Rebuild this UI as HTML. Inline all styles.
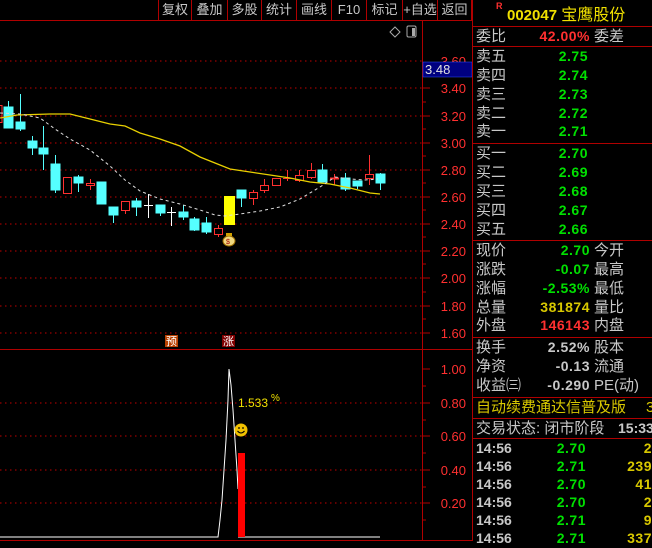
<!DOCTYPE html>
<html><head><meta charset="utf-8"><style>
*{margin:0;padding:0;box-sizing:border-box}
body{width:652px;height:541px;background:#000;overflow:hidden;position:relative;font-family:"Liberation Sans","Noto Sans CJK SC",sans-serif;}
.a{position:absolute;white-space:nowrap}
.btn{position:absolute;top:0;height:20px;line-height:20px;font-size:13px;color:#c8c8c8;text-align:center;border-left:1px solid #b00000}
.r{position:absolute;left:474px;width:178px;height:19px;font-size:15px;line-height:19px;color:#c8c8c8}
.r span{position:absolute}
.l{left:2px}
.v{right:82px;font-weight:bold;font-size:14px;letter-spacing:0.5px}
.t{left:120px}
.g{color:#00e000}.rd{color:#ff3030}.y{color:#d8c800}.w{color:#c8c8c8}
.hl{position:absolute;left:472px;width:180px;height:1px;background:#b00000}
</style></head><body>
<div class="btn" style="left:158px;width:33px">复权</div>
<div class="btn" style="left:191px;width:36px">叠加</div>
<div class="btn" style="left:227px;width:34px">多股</div>
<div class="btn" style="left:261px;width:35px">统计</div>
<div class="btn" style="left:296px;width:35px">画线</div>
<div class="btn" style="left:331px;width:35px">F10</div>
<div class="btn" style="left:366px;width:36px">标记</div>
<div class="btn" style="left:402px;width:35px">+自选</div>
<div class="btn" style="left:437px;width:35px;border-right:1px solid #b00000">返回</div>
<div class="a" style="left:0;top:20px;width:472px;height:1px;background:#b00000"></div>
<div class="a" style="left:472px;top:0;width:1px;height:541px;background:#b00000"></div>
<div class="a" style="left:496px;top:1px;font-size:9px;color:#ff3030;font-weight:bold">R</div>
<div class="a" style="left:507px;top:1px;font-size:15px;color:#f0e000;font-weight:bold">002047 <span style="font-weight:normal;font-size:16px">宝鹰股份</span></div>

<svg class="a" style="left:0;top:0" width="472" height="541">
<g stroke="#c00000" stroke-dasharray="1.5,3.5">
<line x1="0" y1="61" x2="422" y2="61"/><line x1="0" y1="88" x2="422" y2="88"/><line x1="0" y1="116" x2="422" y2="116"/><line x1="0" y1="143" x2="422" y2="143"/><line x1="0" y1="170" x2="422" y2="170"/><line x1="0" y1="197" x2="422" y2="197"/><line x1="0" y1="224" x2="422" y2="224"/><line x1="0" y1="251" x2="422" y2="251"/><line x1="0" y1="278" x2="422" y2="278"/><line x1="0" y1="306" x2="422" y2="306"/><line x1="0" y1="333" x2="422" y2="333"/>
<line x1="0" y1="403" x2="422" y2="403"/><line x1="0" y1="436" x2="422" y2="436"/><line x1="0" y1="470" x2="422" y2="470"/><line x1="0" y1="503" x2="422" y2="503"/>
</g>
<line x1="0" y1="349.5" x2="472" y2="349.5" stroke="#b00000"/>
<line x1="422.5" y1="20" x2="422.5" y2="541" stroke="#b00000"/>
<g stroke="#b00000">
<line x1="422" y1="88" x2="430" y2="88"/><line x1="422" y1="116" x2="430" y2="116"/><line x1="422" y1="143" x2="430" y2="143"/><line x1="422" y1="170" x2="430" y2="170"/><line x1="422" y1="197" x2="430" y2="197"/><line x1="422" y1="224" x2="430" y2="224"/><line x1="422" y1="251" x2="430" y2="251"/><line x1="422" y1="278" x2="430" y2="278"/><line x1="422" y1="306" x2="430" y2="306"/><line x1="422" y1="333" x2="430" y2="333"/>
<line x1="422" y1="102" x2="426" y2="102"/><line x1="422" y1="129" x2="426" y2="129"/><line x1="422" y1="156" x2="426" y2="156"/><line x1="422" y1="183" x2="426" y2="183"/><line x1="422" y1="210" x2="426" y2="210"/><line x1="422" y1="237" x2="426" y2="237"/><line x1="422" y1="264" x2="426" y2="264"/><line x1="422" y1="292" x2="426" y2="292"/><line x1="422" y1="319" x2="426" y2="319"/>
<line x1="422" y1="369" x2="430" y2="369"/><line x1="422" y1="403" x2="430" y2="403"/><line x1="422" y1="436" x2="430" y2="436"/><line x1="422" y1="470" x2="430" y2="470"/><line x1="422" y1="503" x2="430" y2="503"/>
<line x1="422" y1="386" x2="426" y2="386"/><line x1="422" y1="420" x2="426" y2="420"/><line x1="422" y1="453" x2="426" y2="453"/><line x1="422" y1="487" x2="426" y2="487"/><line x1="422" y1="520" x2="426" y2="520"/>
</g>
<g fill="#ff3030" font-size="13" font-family="Liberation Sans" text-anchor="end">
<text x="466" y="66">3.60</text><text x="466" y="93">3.40</text><text x="466" y="121">3.20</text><text x="466" y="148">3.00</text><text x="466" y="175">2.80</text><text x="466" y="202">2.60</text><text x="466" y="229">2.40</text><text x="466" y="256">2.20</text><text x="466" y="283">2.00</text><text x="466" y="311">1.80</text><text x="466" y="338">1.60</text>
<text x="466" y="374">1.00</text><text x="466" y="408">0.80</text><text x="466" y="441">0.60</text><text x="466" y="475">0.40</text><text x="466" y="508">0.20</text>
</g>
<rect x="423" y="62" width="49" height="15" fill="#000080" stroke="#3050ff" stroke-width="0.5"/>
<text x="425" y="74" fill="#e0e0e0" font-size="13" font-family="Liberation Sans">3.48</text>
<path d="M395 27 L400 32 L395 37 L390 32 Z" fill="none" stroke="#aaa"/>
<rect x="407" y="26" width="9" height="11" rx="1.5" fill="none" stroke="#aaa"/><rect x="412" y="28" width="3" height="8" fill="#aaa"/>
<g stroke="#55ffff" fill="#55ffff">
<line x1="8.5" y1="101" x2="8.5" y2="128"/><rect x="4" y="107" width="9" height="21"/>
<line x1="20.5" y1="94" x2="20.5" y2="131"/><rect x="16" y="122" width="9" height="7"/>
<line x1="32.5" y1="136" x2="32.5" y2="155"/><rect x="28" y="141" width="9" height="7"/>
<line x1="43.5" y1="126" x2="43.5" y2="170"/><rect x="39" y="148" width="9" height="6"/>
<line x1="55.5" y1="155" x2="55.5" y2="193"/><rect x="51" y="164" width="9" height="26"/>
<line x1="78.5" y1="175" x2="78.5" y2="192"/><rect x="74" y="177" width="9" height="6"/>
<rect x="97" y="182" width="9" height="22"/>
<line x1="113.5" y1="207" x2="113.5" y2="223"/><rect x="109" y="207" width="9" height="8"/>
<line x1="136.5" y1="198" x2="136.5" y2="216"/><rect x="132" y="201" width="9" height="6"/>
<line x1="160.5" y1="205" x2="160.5" y2="216"/><rect x="156" y="205" width="9" height="8"/>
<line x1="183.5" y1="205" x2="183.5" y2="220"/><rect x="179" y="212" width="9" height="5"/>
<line x1="194.5" y1="217" x2="194.5" y2="231"/><rect x="190" y="219" width="9" height="11"/>
<line x1="206.5" y1="217" x2="206.5" y2="234"/><rect x="202" y="223" width="9" height="9"/>
<line x1="241.5" y1="190" x2="241.5" y2="207"/><rect x="237" y="190" width="9" height="8"/>
<line x1="322.5" y1="164" x2="322.5" y2="182"/><rect x="318" y="170" width="9" height="12"/>
<line x1="345.5" y1="173" x2="345.5" y2="191"/><rect x="341" y="178" width="9" height="11"/>
<line x1="357.5" y1="181" x2="357.5" y2="189"/><rect x="353" y="181" width="9" height="5"/>
<line x1="380.5" y1="173" x2="380.5" y2="190"/><rect x="376" y="174" width="9" height="9"/>
</g>
<g stroke="#ff3030" fill="none">
<rect x="63.5" y="177.5" width="8" height="16"/>
<line x1="90.5" y1="179" x2="90.5" y2="190"/><rect x="86.5" y="183.5" width="8" height="2" fill="#000"/>
<line x1="125.5" y1="211" x2="125.5" y2="214"/><rect x="121.5" y="201.5" width="8" height="9"/>
<line x1="218.5" y1="225" x2="218.5" y2="237"/><rect x="214.5" y="228.5" width="8" height="6" fill="#000"/>
<line x1="253.5" y1="190" x2="253.5" y2="205"/><rect x="249.5" y="192.5" width="8" height="6" fill="#000"/>
<line x1="264.5" y1="179" x2="264.5" y2="193"/><rect x="260.5" y="185.5" width="8" height="5" fill="#000"/>
<rect x="272.5" y="178.5" width="8" height="7"/>
<line x1="287.5" y1="170" x2="287.5" y2="181"/><line x1="283" y1="178.5" x2="292" y2="178.5"/>
<line x1="299.5" y1="170" x2="299.5" y2="182"/><rect x="295.5" y="175.5" width="8" height="5" fill="#000"/>
<line x1="311.5" y1="163" x2="311.5" y2="179"/><rect x="307.5" y="170.5" width="8" height="7" fill="#000"/>
<line x1="334.5" y1="174" x2="334.5" y2="185"/><line x1="330" y1="178.5" x2="339" y2="178.5" stroke-width="2"/>
<line x1="369.5" y1="155" x2="369.5" y2="185"/><rect x="365.5" y="174.5" width="8" height="4" fill="#000"/>
<rect x="-1" y="105.5" width="3" height="17"/>
</g>
<g stroke="#fff">
<line x1="148.5" y1="194" x2="148.5" y2="218"/><line x1="144" y1="205.5" x2="153" y2="205.5"/>
<line x1="171.5" y1="207" x2="171.5" y2="226"/><line x1="167" y1="212.5" x2="176" y2="212.5"/>
</g>
<rect x="224" y="196" width="11" height="29" fill="#ffff00"/>
<polyline fill="none" stroke="#e8d000" stroke-width="1.3" points="0,118 17,115 50,114 70,114 90,119 110,124 125,126 140,133 160,139 180,146 200,157 215,163 230,169 250,172 270,175 290,178 310,182 330,184 350,188 370,193 380,194"/>
<polyline fill="none" stroke="#ddd" stroke-width="1" stroke-dasharray="3,3" points="0,113 20,114 40,118 55,129 70,139 90,150 110,166 125,180 140,191 160,199 180,204 200,210 215,215 225,216 240,214 260,211 280,207 300,199 320,187 335,177 350,179 365,180 378,179"/>
<ellipse cx="229" cy="241" rx="6" ry="5" fill="#f0d880" stroke="#a07000"/><rect x="226" y="233" width="6" height="3" fill="#d0a000"/>
<text x="226" y="244" font-size="7" fill="#a00000">$</text>
<rect x="165" y="335" width="13" height="12" fill="#b84000"/><text x="166" y="345" font-size="11" fill="#fff" font-family="Noto Sans CJK SC">预</text>
<rect x="222" y="335" width="13" height="12" fill="#800000"/><text x="223" y="345" font-size="11" fill="#fff" font-family="Noto Sans CJK SC">涨</text>
<polyline fill="none" stroke="#fff" points="0,537 218,537 220,520 222,500 224,470 226,440 228,400 229,369 231,385 233,410 235,440 237,470 238,489"/>
<line x1="238" y1="537" x2="380" y2="537" stroke="#fff"/>
<rect x="238" y="453" width="7" height="84" fill="#ff0000"/>
<circle cx="241" cy="430" r="6.5" fill="#f0c000"/><circle cx="239" cy="428" r="0.9" fill="#000"/><circle cx="243" cy="428" r="0.9" fill="#000"/><path d="M237.5 431 Q241 435 244.5 431" stroke="#000" fill="none"/>
<text x="238" y="407" font-size="12" fill="#f0e000" font-family="Liberation Sans">1.533</text><text x="271" y="401" font-size="10" fill="#f0e000">%</text>
<line x1="0" y1="540.5" x2="472" y2="540.5" stroke="#b00000"/>
</svg>

<div class="hl" style="top:26px"></div>
<div class="hl" style="top:46px"></div>
<div class="hl" style="top:143px"></div>
<div class="hl" style="top:240px"></div>
<div class="hl" style="top:337px"></div>
<div class="hl" style="top:397px"></div>
<div class="hl" style="top:418px"></div>
<div class="hl" style="top:438px"></div>

<div class="r" style="top:27px"><span class="l">委比</span><span class="v rd" style="right:62px">42.00%</span><span class="t" style="left:120px">委差</span></div>
<div class="r" style="top:47px"><span class="l">卖五</span><span class="v g" style="right:64px">2.75</span></div>
<div class="r" style="top:66px"><span class="l">卖四</span><span class="v g" style="right:64px">2.74</span></div>
<div class="r" style="top:85px"><span class="l">卖三</span><span class="v g" style="right:64px">2.73</span></div>
<div class="r" style="top:104px"><span class="l">卖二</span><span class="v g" style="right:64px">2.72</span></div>
<div class="r" style="top:122px"><span class="l">卖一</span><span class="v g" style="right:64px">2.71</span></div>
<div class="r" style="top:144px"><span class="l">买一</span><span class="v g" style="right:64px">2.70</span></div>
<div class="r" style="top:163px"><span class="l">买二</span><span class="v g" style="right:64px">2.69</span></div>
<div class="r" style="top:182px"><span class="l">买三</span><span class="v g" style="right:64px">2.68</span></div>
<div class="r" style="top:201px"><span class="l">买四</span><span class="v g" style="right:64px">2.67</span></div>
<div class="r" style="top:220px"><span class="l">买五</span><span class="v g" style="right:64px">2.66</span></div>
<div class="r" style="top:241px"><span class="l">现价</span><span class="v g" style="right:62px">2.70</span><span class="t">今开</span></div>
<div class="r" style="top:260px"><span class="l">涨跌</span><span class="v g" style="right:62px">-0.07</span><span class="t">最高</span></div>
<div class="r" style="top:279px"><span class="l">涨幅</span><span class="v g" style="right:62px">-2.53%</span><span class="t">最低</span></div>
<div class="r" style="top:298px"><span class="l">总量</span><span class="v y" style="right:62px">381874</span><span class="t">量比</span></div>
<div class="r" style="top:316px"><span class="l">外盘</span><span class="v rd" style="right:62px">146143</span><span class="t">内盘</span></div>
<div class="r" style="top:338px"><span class="l">换手</span><span class="v w" style="right:62px">2.52%</span><span class="t">股本</span></div>
<div class="r" style="top:357px"><span class="l">净资</span><span class="v w" style="right:62px">-0.13</span><span class="t">流通</span></div>
<div class="r" style="top:376px"><span class="l">收益㈢</span><span class="v w" style="right:62px">-0.290</span><span class="t">PE(动)</span></div>
<div class="r" style="top:398px;color:#d8c800"><span class="l">自动续费通达信普及版</span><span style="left:172px">3</span></div>
<div class="r" style="top:419px"><span class="l">交易状态: 闭市阶段</span><span style="left:144px;font-weight:bold;font-size:14px">15:33</span></div>
<div class="r" style="top:439px"><span class="l" style="font-weight:bold;font-size:14px">14:56</span><span class="v g" style="right:66px">2.70</span><span class="v y" style="right:0">2</span></div>
<div class="r" style="top:457px"><span class="l" style="font-weight:bold;font-size:14px">14:56</span><span class="v g" style="right:66px">2.71</span><span class="v y" style="right:0">239</span></div>
<div class="r" style="top:475px"><span class="l" style="font-weight:bold;font-size:14px">14:56</span><span class="v g" style="right:66px">2.70</span><span class="v y" style="right:0">41</span></div>
<div class="r" style="top:493px"><span class="l" style="font-weight:bold;font-size:14px">14:56</span><span class="v g" style="right:66px">2.70</span><span class="v y" style="right:0">2</span></div>
<div class="r" style="top:511px"><span class="l" style="font-weight:bold;font-size:14px">14:56</span><span class="v g" style="right:66px">2.71</span><span class="v y" style="right:0">9</span></div>
<div class="r" style="top:529px"><span class="l" style="font-weight:bold;font-size:14px">14:56</span><span class="v g" style="right:66px">2.71</span><span class="v y" style="right:0">337</span></div>
</body></html>
